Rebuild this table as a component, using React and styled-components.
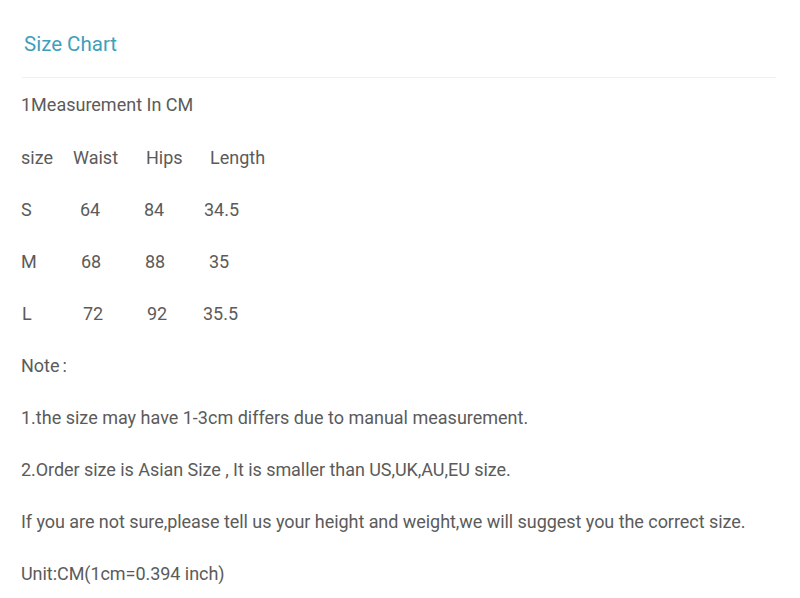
import React from 'react'
import styled, { createGlobalStyle } from 'styled-components'

const GlobalStyle = createGlobalStyle`
    body {
        margin: 0;
        background: #fff;
        font-family: Roboto, "Liberation Sans", sans-serif;
    }
`

// each cell: [text, nudge inside its column]
const rows = [
    [['size', 0], ['Waist', 0], ['Hips', 2], ['Length', 7]],
    [['S', 0], ['64', 7], ['84', 0], ['34.5', 1]],
    [['M', 0], ['68', 8], ['88', 1], ['35', 6]],
    [['L', 1], ['72', 10], ['92', 3], ['35.5', 0]],
]

export default function App () {
    return (
        <Page>
            <GlobalStyle/>
            <Header>
                <Title>Size Chart</Title>
            </Header>
            <Body>
                <Line>1Measurement In CM</Line>
                {/* 尺码表 */}
                {rows.map((r, i) => (
                    <Row key={i}>
                        {r.map(([text, shift], j) => (
                            <Cell key={j} shift={shift}>{text}</Cell>
                        ))}
                    </Row>
                ))}
                <Line>Note<Colon>:</Colon></Line>
                <Line>1.the size may have 1-3cm differs due to manual measurement.</Line>
                <Line condensed>2.Order size is Asian Size , It is smaller than US,UK,AU,EU size.</Line>
                <Line condensed>If you are not sure,please tell us your height and weight,we will suggest you the correct size.</Line>
                <Line condensed>Unit:CM(1cm=0.394 inch)</Line>
            </Body>
        </Page>
    )
}

const Page = styled.div`
    width: 800px;
    height: 598px;
    overflow: hidden;
    color: #5b5b5b;
`

const Header = styled.div`
    margin: 0 24px 0 22px;
    height: 78px;
    border-bottom: 1px solid #f0f0f0;
    display: flex;
    align-items: center;
    padding: 10px 0 0 2px;
    box-sizing: border-box;
`

const Title = styled.div`
    font-size: 20.5px;
    color: #3f9fbb;
`

const Body = styled.div`
    padding: 0 0 0 21px;
`

const Line = styled.div`
    height: 52px;
    line-height: 52px;
    font-size: 18px;
    white-space: nowrap;
    letter-spacing: ${p => (p.condensed ? '-0.05px' : '0')};
    &:first-child {
        height: 54px;
        line-height: 54px;
    }
`

const Colon = styled.span`
    margin-left: 3px;
`

const Row = styled.div`
    display: grid;
    grid-template-columns: 52px 71px 59px auto;
    height: 52px;
    font-size: 18px;
    line-height: 52px;
`

const Cell = styled.span`
    padding-left: ${p => p.shift}px;
    white-space: nowrap;
`
